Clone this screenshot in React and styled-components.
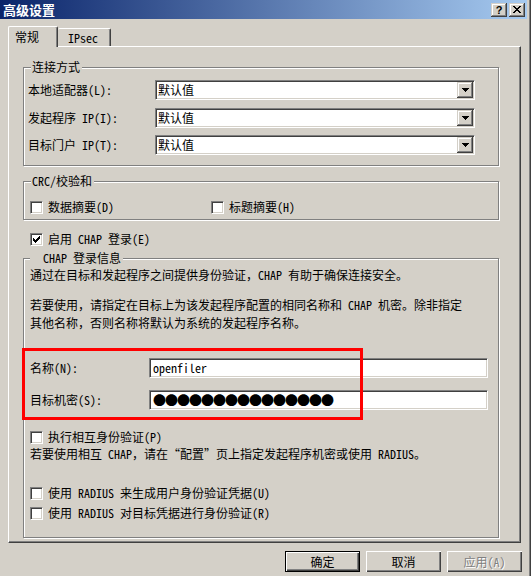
import React from 'react';
import styled, { createGlobalStyle, css } from 'styled-components';

const UI_FONT = `"Noto Sans Mono CJK SC", "Noto Sans CJK SC", "Liberation Mono", monospace`;

const GlobalStyle = createGlobalStyle`
  html, body { margin: 0; padding: 0; }
  body {
    background: #d4d0c8;
    font-family: ${UI_FONT};
    font-size: 12px;
    color: #000;
  }
  *, *::before, *::after { box-sizing: border-box; }
`;

const sunken = css`
  background: #fff;
  border: 1px solid;
  border-color: #808080 #fff #fff #808080;
  box-shadow: inset 1px 1px #404040, inset -1px -1px #d4d0c8;
`;

const raisedSmall = css`
  background: #d4d0c8;
  box-shadow: inset -1px -1px #404040, inset 1px 1px #d4d0c8,
    inset -2px -2px #808080, inset 2px 2px #fff;
`;

const Window = styled.div`
  width: 531px;
  height: 576px;
  display: flex;
  flex-direction: column;
  background: #d4d0c8;
  padding-right: 3px;
  border-right: 1px solid #404040;
  box-shadow: inset -1px 0 #808080;
  overflow: hidden;
`;

const TitleBar = styled.div`
  height: 19px;
  flex: none;
  display: flex;
  align-items: center;
  padding: 0 2px 0 3px;
  background: linear-gradient(90deg, #0a246a 0%, #a6caf0 100%);
`;

const Title = styled.span`
  color: #fff;
  font-weight: 700;
  font-size: 13px;
  line-height: 19px;
`;

const CaptionButtons = styled.div`
  margin-left: auto;
  display: flex;
  gap: 2px;
`;

const CaptionButton = styled.button`
  width: 16px;
  height: 14px;
  padding: 0;
  margin: 0;
  border: 0;
  ${raisedSmall};
  display: flex;
  align-items: center;
  justify-content: center;
  font: 700 11px "Liberation Sans", sans-serif;
  line-height: 14px;
  color: #000;
`;

const TabStrip = styled.div`
  flex: none;
  height: 20px;
  margin-top: 7px;
  padding-left: 8px;
  display: flex;
  align-items: flex-end;
`;

const Tab = styled.div`
  position: relative;
  z-index: ${p => (p.$active ? 1 : 0)};
  width: ${p => p.$w}px;
  height: ${p => (p.$active ? 21 : 18)}px;
  margin-bottom: ${p => (p.$active ? -1 : 0)}px;
  padding-left: ${p => p.$pad}px;
  display: flex;
  align-items: center;
  background: #d4d0c8;
  border-left: ${p => (p.$active ? '1px solid #fff' : '0')};
  border-top: 1px solid #fff;
  border-right: 1px solid #404040;
  border-radius: 2px 2px 0 0;
  box-shadow: inset -1px 0 #808080;
  line-height: 14px;
`;

const Panel = styled.div`
  flex: none;
  margin-left: 8px;
  width: 513px;
  height: 497px;
  padding: 20px 0 0 14px;
  border: 1px solid;
  border-color: #fff #404040 #404040 #fff;
  box-shadow: inset -1px -1px #808080;
  display: flex;
  flex-direction: column;
  align-items: flex-start;
`;

const Group = styled.div`
  position: relative;
  width: 476px;
  margin-top: ${p => p.$mt || 0}px;
  padding: ${p => p.$pad};
  border: 1px solid #808080;
  box-shadow: inset 1px 1px #fff, 1px 1px #fff;
  display: flex;
  flex-direction: column;
  align-items: flex-start;
`;

const Legend = styled.span`
  position: absolute;
  top: -8px;
  left: ${p => p.$left}px;
  padding: 0 2px 0 ${p => p.$padLeft || 1}px;
  background: #d4d0c8;
  line-height: 14px;
  white-space: pre;
`;

const FieldRows = styled.div`
  display: flex;
  flex-direction: column;
  gap: ${p => p.$gap}px;
  margin-top: ${p => p.$mt || 0}px;
`;

const AnnotatedRows = styled(FieldRows)`
  position: relative;
  &::after {
    content: '';
    position: absolute;
    left: -8px;
    top: -10px;
    width: 341px;
    height: 72px;
    border: 3px solid #ff0000;
    pointer-events: none;
  }
`;

const FieldRow = styled.div`
  display: flex;
  align-items: center;
  height: 20px;
`;

const FieldLabel = styled.span`
  width: ${p => p.$w}px;
  flex: none;
  line-height: 14px;
  white-space: pre;
`;

const Combo = styled.div`
  ${sunken};
  width: 320px;
  height: 20px;
  display: flex;
  align-items: center;
  padding: 0 1px 0 2px;
`;

const ComboText = styled.span`
  flex: 1;
  line-height: 16px;
`;

const DropButton = styled.span`
  width: 16px;
  height: 16px;
  flex: none;
  ${raisedSmall};
  display: flex;
  align-items: center;
  justify-content: center;
`;

const TextField = styled.div`
  ${sunken};
  width: 339px;
  height: 20px;
  display: flex;
  align-items: center;
  padding: 0 3px;
  line-height: 16px;
`;

const Dots = styled.span`
  font-family: "Noto Sans CJK SC", sans-serif;
  font-size: 13px;
  letter-spacing: -1px;
  line-height: 16px;
`;

const CheckRow = styled.div`
  display: flex;
  align-items: center;
  height: 14px;
  margin-top: ${p => p.$mt || 0}px;
  margin-left: ${p => p.$ml || 0}px;
`;

const CheckItem = styled.label`
  display: flex;
  align-items: center;
  gap: 5px;
  width: ${p => (p.$w ? `${p.$w}px` : 'auto')};
  line-height: 14px;
  white-space: pre;
`;

const Box = styled.span`
  width: 13px;
  height: 13px;
  flex: none;
  ${sunken};
  display: flex;
  align-items: center;
  justify-content: center;
`;

const Para = styled.div`
  margin-top: ${p => p.$mt || 0}px;
  display: flex;
  flex-direction: column;
`;

const Line = styled.span`
  display: block;
  height: ${p => p.$lh || 14}px;
  line-height: ${p => p.$lh || 14}px;
  white-space: pre;
`;

const ButtonRow = styled.div`
  flex: none;
  margin-top: 8px;
  padding-right: 5px;
  display: flex;
  justify-content: flex-end;
  gap: 6px;
`;

const PushButton = styled.button`
  width: 75px;
  height: 21px;
  margin: 0;
  padding: 0;
  font-family: ${UI_FONT};
  font-size: 12px;
  line-height: 14px;
  background: #d4d0c8;
  color: ${p => (p.$disabled ? '#808080' : '#000')};
  text-shadow: ${p => (p.$disabled ? '1px 1px 0 #fff' : 'none')};
  border: ${p => (p.$default ? '1px solid #000' : '0')};
  box-shadow: inset 1px 1px #fff, inset -1px -1px #404040, inset -2px -2px #808080;
`;

const Check = ({ checked }) => (
  <Box>
    {checked && (
      <svg width="7" height="7" viewBox="0 0 7 7" shapeRendering="crispEdges">
        <path d="M0 2h1v1h1v1h1V3h1V2h1V1h1V0h1v3H6v1H5v1H4v1H3v1H2V6H1V5H0z" fill="#000" />
      </svg>
    )}
  </Box>
);

const Arrow = () => (
  <svg width="7" height="4" viewBox="0 0 7 4" shapeRendering="crispEdges">
    <path d="M0 0h7v1H6v1H5v1H4v1H3V3H2V2H1V1H0z" fill="#000" />
  </svg>
);

const CloseGlyph = () => (
  <svg width="8" height="7" viewBox="0 0 8 7" shapeRendering="crispEdges">
    <path
      d="M0 0h2v1h1v1h2V1h1V0h2v1H7v1H6v1H5v1h1v1h1v1h1v1H6V6H5V5H3v1H2v1H0V6h1V5h1V4h1V3H2V2H1V1H0z"
      fill="#000"
    />
  </svg>
);

export default function App() {
  return (
    <>
      <GlobalStyle />
      <Window>
        <TitleBar>
          <Title>高级设置</Title>
          <CaptionButtons>
            <CaptionButton>?</CaptionButton>
            <CaptionButton>
              <CloseGlyph />
            </CaptionButton>
          </CaptionButtons>
        </TitleBar>

        <TabStrip>
          <Tab $active $w={50} $pad={6}>常规</Tab>
          <Tab $w={53} $pad={10}>IPsec</Tab>
        </TabStrip>

        <Panel>
          <Group $pad="12px 4px 10px 4px">
            <Legend $left={7}>连接方式</Legend>
            <FieldRows $gap={7.5}>
              <FieldRow>
                <FieldLabel $w={127}>本地适配器(L):</FieldLabel>
                <Combo>
                  <ComboText>默认值</ComboText>
                  <DropButton><Arrow /></DropButton>
                </Combo>
              </FieldRow>
              <FieldRow>
                <FieldLabel $w={127}>发起程序 IP(I):</FieldLabel>
                <Combo>
                  <ComboText>默认值</ComboText>
                  <DropButton><Arrow /></DropButton>
                </Combo>
              </FieldRow>
              <FieldRow>
                <FieldLabel $w={127}>目标门户 IP(T):</FieldLabel>
                <Combo>
                  <ComboText>默认值</ComboText>
                  <DropButton><Arrow /></DropButton>
                </Combo>
              </FieldRow>
            </FieldRows>
          </Group>

          <Group $mt={15} $pad="18px 6px 5px 6px">
            <Legend $left={7}>CRC/校验和</Legend>
            <CheckRow>
              <CheckItem $w={181}><Check />数据摘要(D)</CheckItem>
              <CheckItem><Check />标题摘要(H)</CheckItem>
            </CheckRow>
          </Group>

          <CheckRow $mt={12} $ml={7}>
            <CheckItem><Check checked />启用 CHAP 登录(E)</CheckItem>
          </CheckRow>

          <Group $mt={12} $pad="9px 6px 17px 6px">
            <Legend $left={6} $padLeft={13}>CHAP 登录信息</Legend>
            <Para>
              <Line>通过在目标和发起程序之间提供身份验证，CHAP 有助于确保连接安全。</Line>
            </Para>
            <Para $mt={14}>
              <Line $lh={18}>若要使用，请指定在目标上为该发起程序配置的相同名称和 CHAP 机密。除非指定</Line>
              <Line $lh={18}>其他名称，否则名称将默认为系统的发起程序名称。</Line>
            </Para>

            <AnnotatedRows $gap={12} $mt={26}>
              <FieldRow>
                <FieldLabel $w={119}>名称(N):</FieldLabel>
                <TextField>openfiler</TextField>
              </FieldRow>
              <FieldRow>
                <FieldLabel $w={119}>目标机密(S):</FieldLabel>
                <TextField>
                  <Dots>●●●●●●●●●●●●●●●</Dots>
                </TextField>
              </FieldRow>
            </AnnotatedRows>

            <CheckRow $mt={20}>
              <CheckItem><Check />执行相互身份验证(P)</CheckItem>
            </CheckRow>
            <Para $mt={3}>
              <Line>若要使用相互 CHAP，请在“配置”页上指定发起程序机密或使用 RADIUS。</Line>
            </Para>
            <CheckRow $mt={25}>
              <CheckItem><Check />使用 RADIUS 来生成用户身份验证凭据(U)</CheckItem>
            </CheckRow>
            <CheckRow $mt={6}>
              <CheckItem><Check />使用 RADIUS 对目标凭据进行身份验证(R)</CheckItem>
            </CheckRow>
          </Group>
        </Panel>

        <ButtonRow>
          <PushButton $default>确定</PushButton>
          <PushButton>取消</PushButton>
          <PushButton $disabled>应用(A)</PushButton>
        </ButtonRow>
      </Window>
    </>
  );
}
